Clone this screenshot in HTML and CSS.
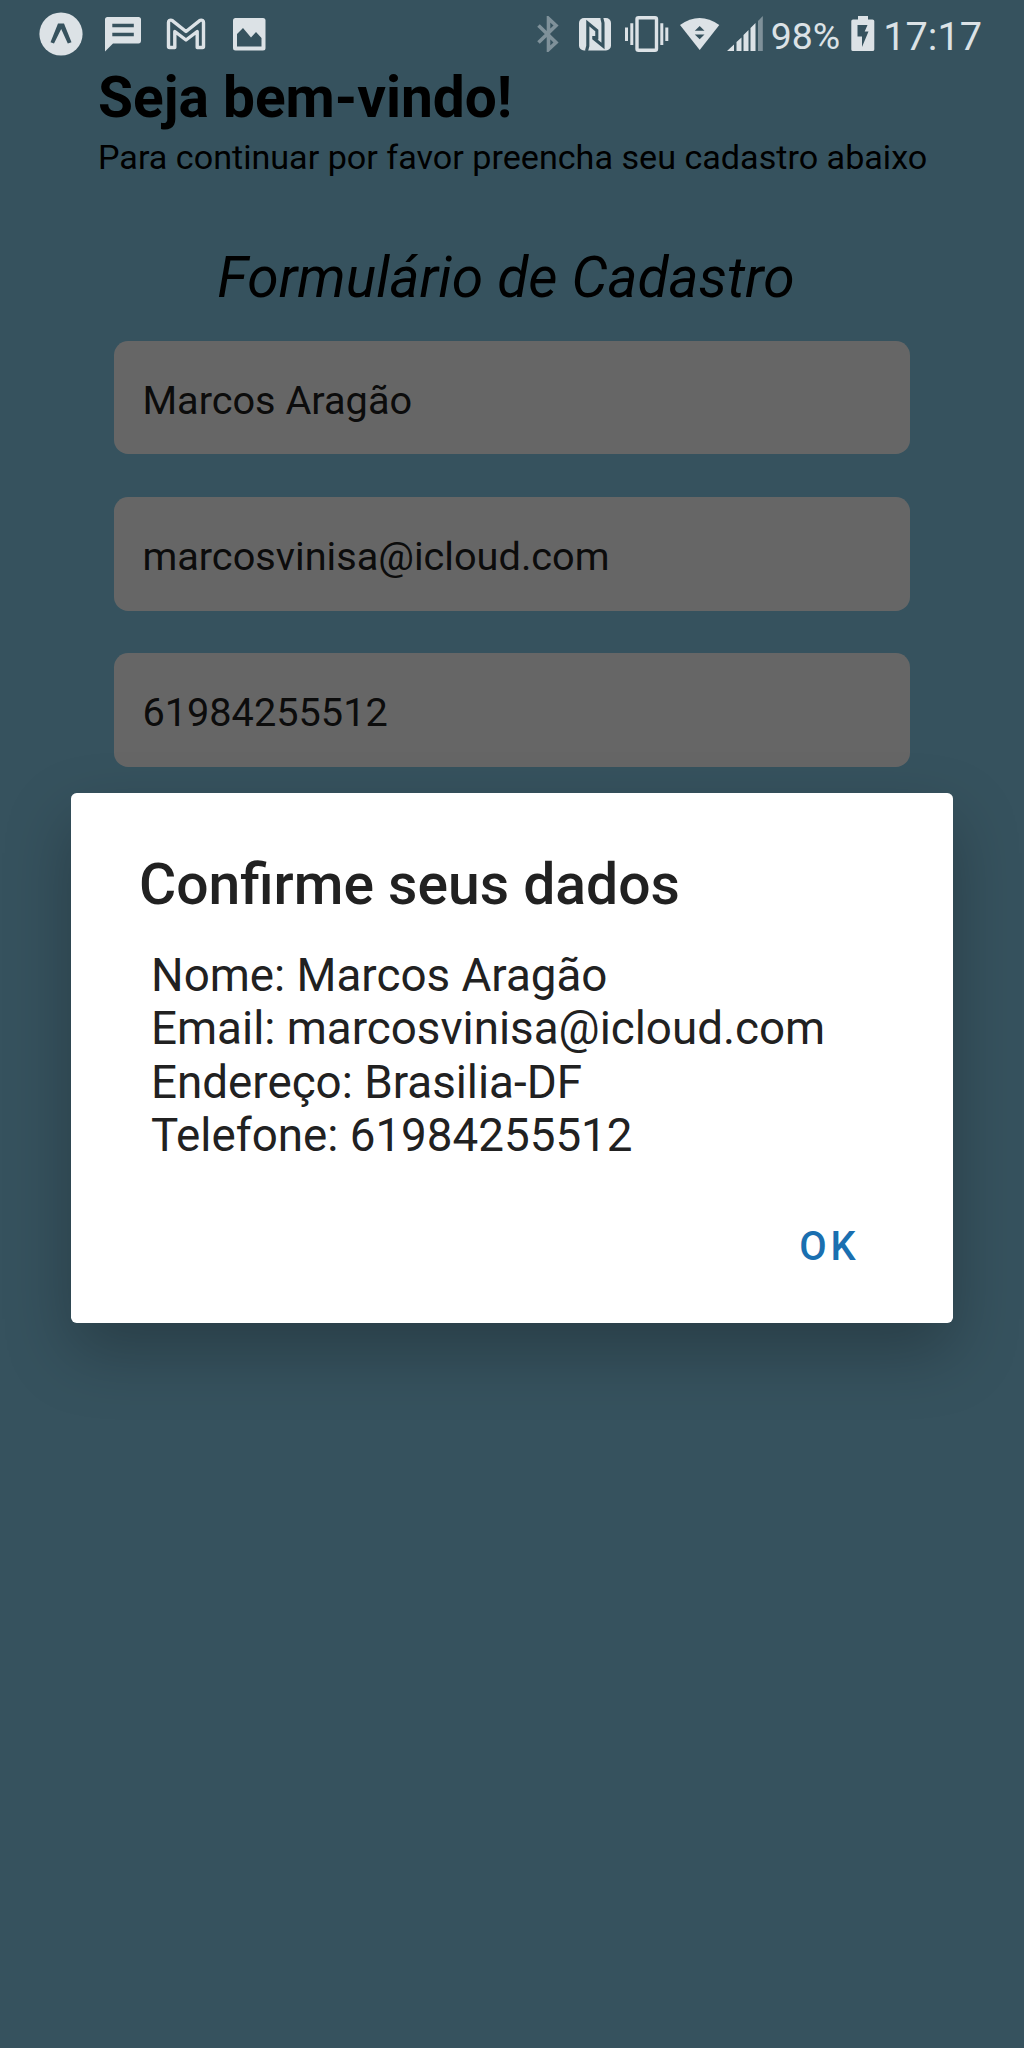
FILE: index.html
```
<!DOCTYPE html>
<html lang="pt-BR">
<head>
<meta charset="utf-8">
<title>Cadastro</title>
<link rel="stylesheet" href="styles.css">
</head>
<body>
<div class="screen">
  <main class="app">
    <h1 class="welcome">Seja bem-vindo!</h1>
    <p class="intro">Para continuar por favor preencha seu cadastro abaixo</p>
    <h2 class="form-title">Formulário de Cadastro</h2>
    <form class="form">
      <div class="field">Marcos Aragão</div>
      <div class="field">marcosvinisa@icloud.com</div>
      <div class="field">61984255512</div>
    </form>
  </main>

  <div class="scrim">
    <section class="dialog" role="dialog">
      <h2 class="dialog-title">Confirme seus dados</h2>
      <div class="dialog-message">
        <p>Nome: Marcos Aragão</p>
        <p>Email: marcosvinisa@icloud.com</p>
        <p>Endereço: Brasilia-DF</p>
        <p>Telefone: 61984255512</p>
      </div>
      <div class="dialog-actions"><span class="ok">OK</span></div>
    </section>
  </div>

  <header class="status">
    <div class="notifications">
      <svg class="expo" width="44" height="44" viewBox="0 0 44 44"><circle cx="22" cy="22" r="21.6" fill="currentColor"/><path d="M11.500 30.300 19 11.500H25L32.500 30.300 28.800 31.500 22.200 17 15 31.500Z" class="cut"/></svg>
      <svg width="36" height="36" viewBox="0 0 36 36"><path d="M2.5 1H33.5Q36 1 36 3.500V24.500Q36 27.500 33.500 27.500H8L0 35.500V3.500Q0 1 2.500 1Z" fill="currentColor"/><path d="M7.300 7.800H28.800V11.200H7.300ZM7.300 16.800H28.800V20.300H7.300Z" class="cut"/></svg>
      <svg class="mail" width="40" height="32" viewBox="0 0 40 32"><path d="M2.500 4.500V28.500Q2.500 29.500 3.500 29.500H8.800V13.500L20 22 31.200 13.500V29.500H36.500Q37.500 29.500 37.500 28.500V4.500Q37.500 1.500 34 2.300L20 13.500 6 2.300Q2.500 1.500 2.500 4.500Z" fill="none" stroke="currentColor" stroke-width="3.400" stroke-linejoin="round"/></svg>
      <svg width="33" height="33" viewBox="0 0 33 33"><rect width="32.500" height="32.500" rx="2.500" fill="currentColor"/><path d="M4 28.500V16L10 10 18 19.500 23 14 28.500 20V28.500Z" class="cut"/></svg>
    </div>
    <div class="system">
      <svg class="bluetooth" width="22" height="36" viewBox="0 0 22 36"><path d="M1.500 9.500 19 26.500 11.500 33.500V2.500L19 9.500 1.500 26.500" fill="none" stroke="currentColor" stroke-width="3.600"/></svg>
      <svg class="nfc" width="33" height="33" viewBox="0 0 33 33"><rect width="32" height="32.500" rx="5" fill="currentColor"/><path d="M7.500 33 8.800 28V5L17.800 12.500V21.500M14.800 18V20.500L24 28V5L22.800 0" class="nfc-line"/></svg>
      <svg class="vibrate" width="44" height="36" viewBox="0 0 44 36"><path d="M0 11.500H3V25H0ZM5.300 7.300H8.300V29H5.300ZM35.300 7.300H38.300V29H35.300ZM40.300 11.500H43.300V25H40.300Z" fill="currentColor"/><rect x="12" y="1.700" width="19.500" height="32.500" rx="1.500" fill="none" stroke="currentColor" stroke-width="3.400"/></svg>
      <svg class="wifi" width="40" height="33" viewBox="0 0 40 33"><path d="M0 7Q19.500-7 39.300 7L19.700 32Z" fill="currentColor"/><path d="M14.800 12.700 19.700 8 24.500 12.700ZM14.800 16.600H24.500L19.700 21.300Z" class="cut"/></svg>
      <svg class="signal" width="37" height="36" viewBox="0 0 37 36"><path d="M0 35 7 28.500V35ZM9.500 26 14.500 21.500V35H9.500ZM16.500 19 21.500 14V35H16.500ZM23.500 12 28.500 7V35H23.500Z" fill="currentColor"/><path d="M31 5 35.800 0V35H31Z" fill="#7f919a"/></svg>
      <span class="percent">98%</span>
      <svg class="battery" width="24" height="36" viewBox="0 0 24 36"><path d="M7 0H17V3.500H21.500Q23.300 3.500 23.300 5V33.500Q23.300 35 21.500 35H2Q.3 35 .3 33.500V5Q.3 3.500 2 3.500H7Z" fill="currentColor"/><path d="M6.500 9H16.500L13.700 15.500H17.500L11 31V20.500H6.500Z" class="cut"/></svg>
      <span class="clock">17:17</span>
    </div>
  </header>
</div>
</body>
</html>
```
FILE: styles.css
```
* {
  box-sizing: border-box;
  margin: 0;
  padding: 0;
}

body {
  font-family: Roboto, "Liberation Sans", sans-serif;
}

.screen {
  position: relative;
  width: 1024px;
  height: 2048px;
  overflow: hidden;
  background: skyblue;
}

.app {
  padding: 64px 98px 0;
  color: #000;
}

.welcome {
  font-size: 56.800px;
  font-weight: 700;
  line-height: 67px;
}

.intro {
  margin-top: 6px;
  font-size: 34.130px;
  line-height: 40px;
  white-space: nowrap;
}

.form-title {
  margin: 67px -98px 0 -110px;
  font-size: 56.900px;
  font-style: italic;
  font-weight: 400;
  line-height: 67px;
  text-align: center;
}

.form {
  display: flex;
  flex-direction: column;
  gap: 42.700px;
  margin: 29.700px 16px 0;
}

.field {
  display: flex;
  align-items: center;
  height: 113.700px;
  padding: 5px 28.400px 0;
  border-radius: 14.200px;
  background: #fff;
  color: #202020;
  font-size: 39.700px;
}

.scrim {
  position: absolute;
  inset: 0;
  padding: 792.500px 71px 0;
  background: rgba(0, 0, 0, 0.6);
}

.dialog {
  height: 530.700px;
  padding: 58.500px 68px 0;
  border-radius: 5.700px;
  background: #fff;
  box-shadow: 0 28px 66px rgba(0, 0, 0, 0.25);
  color: #212121;
}

.dialog-title {
  font-size: 57px;
  font-weight: 500;
  line-height: 67px;
}

.dialog-message {
  margin: 31px 0 0 12px;
  font-size: 45.760px;
  line-height: 53.300px;
  white-space: nowrap;
}

.dialog-actions {
  display: flex;
  justify-content: flex-end;
  margin-top: 60.500px;
  padding-right: 25.500px;
}

.ok {
  color: #1a6fb0;
  font-size: 39.800px;
  font-weight: 500;
  letter-spacing: 3.800px;
  line-height: 47px;
}

.status {
  position: absolute;
  inset: 0 0 auto;
  display: flex;
  justify-content: space-between;
  height: 68px;
  padding: 0 42px 0 39px;
  color: #dce2e6;
}

.status svg {
  display: block;
  flex: none;
}

.cut {
  fill: #36525e;
}

.nfc-line {
  fill: none;
  stroke: #36525e;
  stroke-width: 3.100px;
}

.notifications,
.system {
  display: flex;
  align-items: center;
}

.notifications {
  gap: 25px;
}

.expo {
  margin-right: -3px;
}

.mail {
  margin-right: 1.500px;
}

.system {
  white-space: nowrap;
}

.bluetooth {
  margin-right: 20px;
  color: #7f919a;
}

.nfc {
  margin-right: 13px;
}

.vibrate {
  margin-right: 11px;
}

.wifi {
  margin-right: 7px;
}

.signal {
  margin-right: 7px;
}

.percent {
  padding-top: 3px;
  font-size: 37.400px;
}

.battery {
  margin: 0 8px 0 11px;
}

.clock {
  padding-top: 4px;
  font-size: 39.700px;
}
```
